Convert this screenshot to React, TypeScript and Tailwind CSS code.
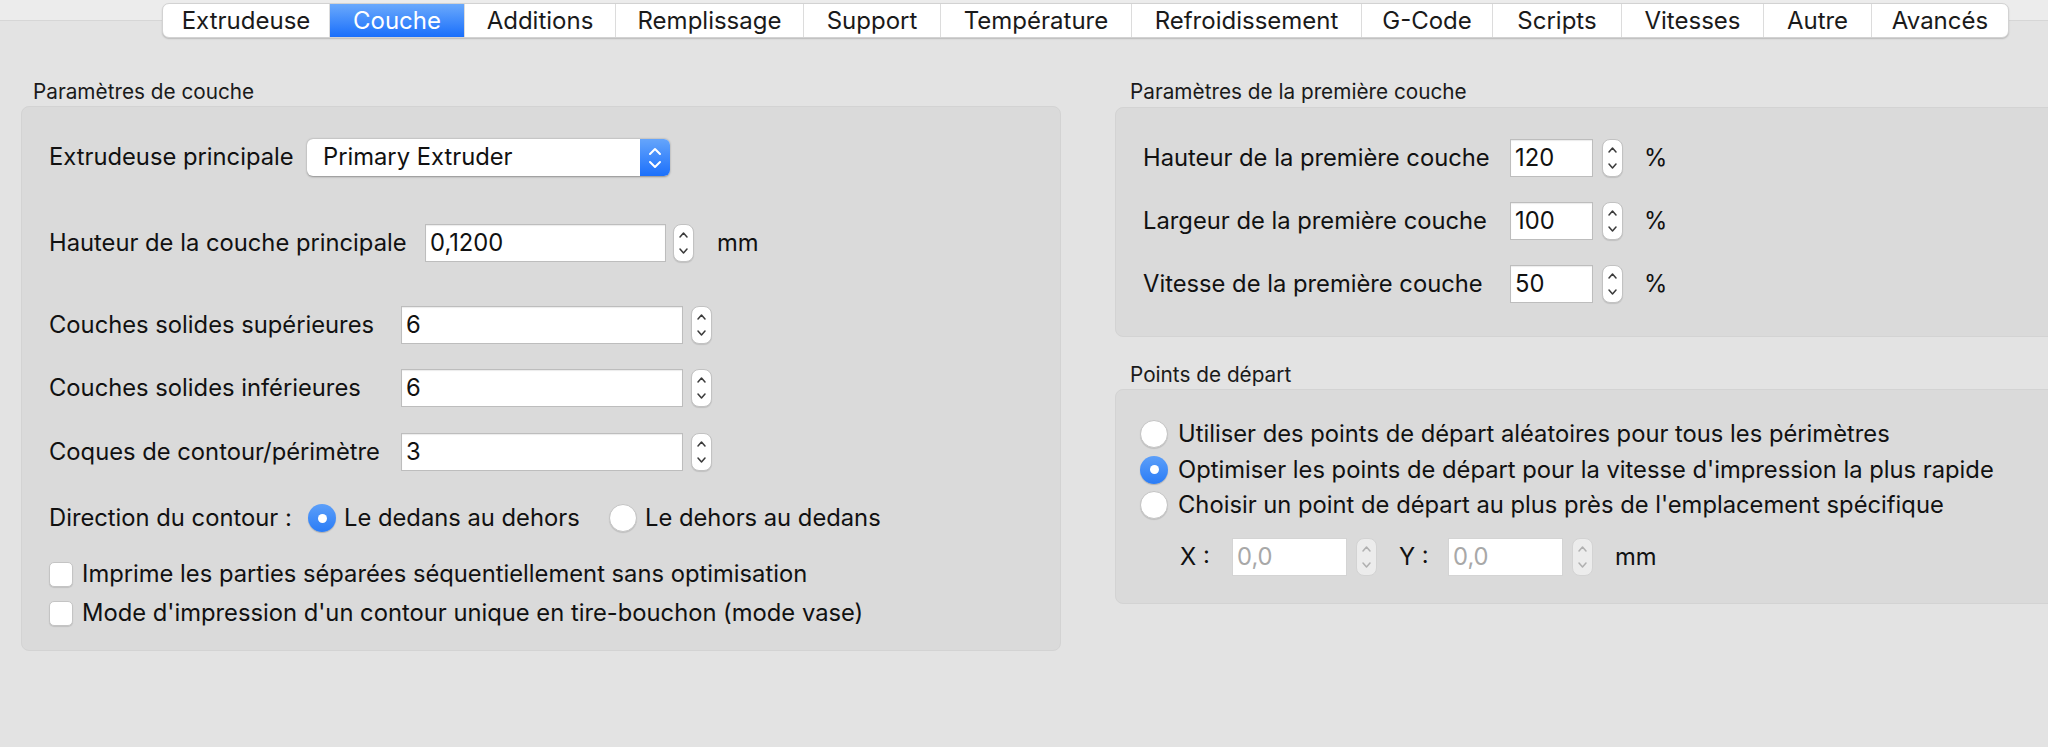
import React from "react";

const tabs: { label: string; w: string; active?: boolean }[] = [
  { label: "Extrudeuse", w: "w-[166px]" },
  { label: "Couche", w: "w-[135px]", active: true },
  { label: "Additions", w: "w-[151px]" },
  { label: "Remplissage", w: "w-[188px]" },
  { label: "Support", w: "w-[137px]" },
  { label: "Température", w: "w-[191px]" },
  { label: "Refroidissement", w: "w-[230px]" },
  { label: "G-Code", w: "w-[131px]" },
  { label: "Scripts", w: "w-[129px]" },
  { label: "Vitesses", w: "w-[142px]" },
  { label: "Autre", w: "w-[108px]" },
  { label: "Avancés", w: "w-[137px]" },
];

function Stepper({ disabled }: { disabled?: boolean }) {
  const c = disabled ? "#b0b0b0" : "#3a3a3a";
  return (
    <div
      className={
        "h-[38px] w-[21px] shrink-0 rounded-[8px] border " +
        (disabled
          ? "border-[#d3d3d3] bg-[#ececec]"
          : "border-[#c2c2c2] bg-white shadow-[0_1px_1px_rgba(0,0,0,0.12)]")
      }
    >
      <svg width="19" height="36" viewBox="0 0 19 36" className="block">
        <path d="M6 12 L9.5 8 L13 12" fill="none" stroke={c} strokeWidth="1.5" strokeLinecap="round" strokeLinejoin="round" />
        <path d="M6 24 L9.5 28 L13 24" fill="none" stroke={c} strokeWidth="1.5" strokeLinecap="round" strokeLinejoin="round" />
      </svg>
    </div>
  );
}

function Field({ value, w, disabled }: { value: string; w: string; disabled?: boolean }) {
  return (
    <div
      className={
        "flex h-[38px] shrink-0 items-center border bg-white pl-[4px] text-[23.75px] " +
        w +
        (disabled
          ? " border-[#d4d4d4] text-[#a8a8a8]"
          : " border-[#bdbdbd] text-[#111] shadow-[inset_0_1px_1px_rgba(0,0,0,0.08)]")
      }
    >
      {value}
    </div>
  );
}

function Radio({ checked }: { checked?: boolean }) {
  return checked ? (
    <div className="flex h-[28px] w-[28px] shrink-0 items-center justify-center rounded-full bg-[linear-gradient(to_bottom,#5c9ff9,#2a7cf6)] shadow-[0_1px_1px_rgba(0,0,0,0.2)]">
      <div className="h-[9px] w-[9px] rounded-full bg-white" />
    </div>
  ) : (
    <div className="h-[28px] w-[28px] shrink-0 rounded-full border border-[#c4c4c4] bg-white shadow-[0_1px_1px_rgba(0,0,0,0.12)]" />
  );
}

function Checkbox() {
  return (
    <div className="h-[25px] w-[24px] shrink-0 rounded-[5px] border border-[#c4c4c4] bg-white shadow-[0_1px_1px_rgba(0,0,0,0.12)]" />
  );
}

export default function App() {
  return (
    <div className="relative h-[747px] w-[2048px] overflow-hidden bg-[linear-gradient(to_bottom,#ececec_20px,#d6d6d6_20px,#d6d6d6_21px,#e3e3e3_21px)] font-['Inter',sans-serif] text-[#111]">
      {/* Tab bar */}
      <div className="flex pl-[162px] pt-[3px]">
        <div className="flex h-[35px] overflow-hidden rounded-[7px] border border-[#d2d2d2] bg-white shadow-[0_1px_1.5px_rgba(0,0,0,0.18)]">
          {tabs.map((t, i) => (
            <div
              key={t.label}
              className={
                "flex h-full items-center justify-center text-[24px] leading-none " +
                t.w +
                (i > 0 ? " border-l border-[#dcdcdc]" : "") +
                (t.active
                  ? " bg-[linear-gradient(to_bottom,#6aa9fc,#1a6ffb)] text-white"
                  : " text-[#1a1a1a]")
              }
            >
              {t.label}
            </div>
          ))}
        </div>
      </div>

      <div className="mt-[41px] flex">
        {/* Left column */}
        <div className="ml-[21px] w-[1040px] shrink-0">
          <div className="h-[26px] pl-[12px] text-[20.75px] leading-[26px] text-[#1a1a1a]">Paramètres de couche</div>
          <div className="mt-[1px] flex h-[545px] flex-col rounded-[8px] border border-[#d3d3d3] bg-[#dadada] pl-[27px] pt-[31px] text-[23.75px]">
            <div className="flex h-[38px] items-center">
              <div className="w-[258px] shrink-0">Extrudeuse principale</div>
              <div className="flex h-[37px] w-[363px] items-stretch rounded-[6px] bg-white shadow-[0_0.5px_2px_rgba(0,0,0,0.35)]">
                <div className="flex flex-1 items-center pl-[16px]">Primary Extruder</div>
                <div className="w-[30px] rounded-r-[6px] bg-[linear-gradient(to_bottom,#65a5fb,#1c70fb)]">
                  <svg width="30" height="37" viewBox="0 0 30 37" className="block">
                    <path d="M10 15 L15 10 L20 15" fill="none" stroke="#fff" strokeWidth="2" strokeLinecap="round" strokeLinejoin="round" />
                    <path d="M10 23 L15 28 L20 23" fill="none" stroke="#fff" strokeWidth="2" strokeLinecap="round" strokeLinejoin="round" />
                  </svg>
                </div>
              </div>
            </div>

            <div className="mt-[48px] flex h-[38px] items-center">
              <div className="w-[376px] shrink-0">Hauteur de la couche principale</div>
              <Field value="0,1200" w="w-[241px]" />
              <div className="ml-[7px]">
                <Stepper />
              </div>
              <div className="ml-[23px]">mm</div>
            </div>

            <div className="mt-[44px] flex h-[38px] items-center">
              <div className="w-[352px] shrink-0">Couches solides supérieures</div>
              <Field value="6" w="w-[282px]" />
              <div className="ml-[8px]">
                <Stepper />
              </div>
            </div>

            <div className="mt-[25px] flex h-[38px] items-center">
              <div className="w-[352px] shrink-0">Couches solides inférieures</div>
              <Field value="6" w="w-[282px]" />
              <div className="ml-[8px]">
                <Stepper />
              </div>
            </div>

            <div className="mt-[26px] flex h-[38px] items-center">
              <div className="w-[352px] shrink-0">Coques de contour/périmètre</div>
              <Field value="3" w="w-[282px]" />
              <div className="ml-[8px]">
                <Stepper />
              </div>
            </div>

            <div className="mt-[32px] flex h-[30px] items-center">
              <div className="w-[259px] shrink-0">Direction du contour :</div>
              <Radio checked />
              <div className="ml-[8px] w-[265px] shrink-0">Le dedans au dehors</div>
              <Radio />
              <div className="ml-[8px]">Le dehors au dedans</div>
            </div>

            <div className="mt-[28px] flex h-[26px] items-center">
              <Checkbox />
              <div className="ml-[9px]">Imprime les parties séparées séquentiellement sans optimisation</div>
            </div>

            <div className="mt-[13px] flex h-[26px] items-center">
              <Checkbox />
              <div className="ml-[9px]">Mode d'impression d'un contour unique en tire-bouchon (mode vase)</div>
            </div>
          </div>
        </div>

        {/* Right column */}
        <div className="ml-[54px] w-[960px] shrink-0">
          <div className="h-[26px] pl-[15px] text-[20.75px] leading-[26px] text-[#1a1a1a]">Paramètres de la première couche</div>
          <div className="mt-[2px] flex h-[230px] flex-col gap-[25px] rounded-[8px] border border-[#d3d3d3] bg-[#dadada] pl-[27px] pt-[31px] text-[23.75px]">
            {[
              ["Hauteur de la première couche", "120"],
              ["Largeur de la première couche", "100"],
              ["Vitesse de la première couche", "50"],
            ].map(([l, v]) => (
              <div key={l} className="flex h-[38px] items-center">
                <div className="w-[367px] shrink-0">{l}</div>
                <Field value={v} w="w-[83px]" />
                <div className="ml-[9px]">
                  <Stepper />
                </div>
                <div className="ml-[21px]">%</div>
              </div>
            ))}
          </div>

          <div className="mt-[25px] h-[26px] pl-[15px] text-[20.75px] leading-[26px] text-[#1a1a1a]">Points de départ</div>
          <div className="mt-[1px] flex h-[215px] flex-col rounded-[8px] border border-[#d3d3d3] bg-[#dadada] pl-[24px] pt-[29px] text-[23.75px]">
            <div className="flex h-[30px] items-center">
              <Radio />
              <div className="ml-[10px]">Utiliser des points de départ aléatoires pour tous les périmètres</div>
            </div>
            <div className="mt-[5.5px] flex h-[30px] items-center">
              <Radio checked />
              <div className="ml-[10px]">Optimiser les points de départ pour la vitesse d'impression la plus rapide</div>
            </div>
            <div className="mt-[5.5px] flex h-[30px] items-center">
              <Radio />
              <div className="ml-[10px]">Choisir un point de départ au plus près de l'emplacement spécifique</div>
            </div>
            <div className="mt-[18px] flex h-[38px] items-center pl-[40px]">
              <div className="w-[52px] shrink-0">X :</div>
              <Field value="0,0" w="w-[115px]" disabled />
              <div className="ml-[9px]">
                <Stepper disabled />
              </div>
              <div className="ml-[22px] w-[49px] shrink-0">Y :</div>
              <Field value="0,0" w="w-[115px]" disabled />
              <div className="ml-[9px]">
                <Stepper disabled />
              </div>
              <div className="ml-[22px]">mm</div>
            </div>
          </div>
        </div>
      </div>
    </div>
  );
}
